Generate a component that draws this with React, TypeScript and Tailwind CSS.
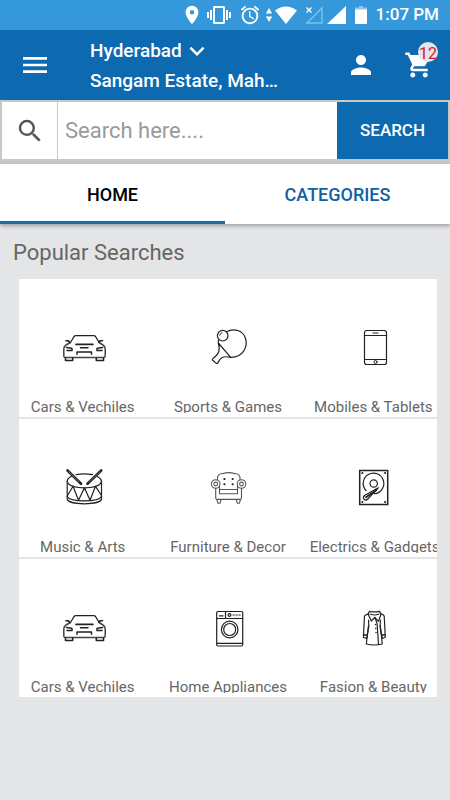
import { useState } from "react";
import type { ReactNode } from "react";
import {
  MdAlarm,
  MdKeyboardArrowDown,
  MdLocationOn,
  MdMenu,
  MdPerson,
  MdSearch,
  MdShoppingCart,
  MdVibration,
} from "react-icons/md";

const LineIcon = ({ children }: { children: ReactNode }) => (
  <svg
    viewBox="0 0 48 48"
    className="mx-auto size-12"
    fill="none"
    stroke="#222"
    strokeWidth="1.2"
    strokeLinecap="round"
    strokeLinejoin="round"
    aria-hidden="true"
  >
    {children}
  </svg>
);

const CarIcon = () => (
  <LineIcon>
    <path d="M11.5 18.5 15 12.6q.6-1 1.8-1h18q1.200 0 1.800 1l3.5 5.900" />
    <path
      d="M11.5 18.5 7 21q-2.200 1.300-2.200 4v7q0 1.600 1.600 1.600h38.400q1.400 0 1.400-1.600v-7q0-2.700-2.200-4l-4-2.500"
      stroke="#444"
      strokeWidth="1.5"
    />
    <path d="M17 20.400h17" strokeWidth="1.6" />
    <path d="M21.500 23.700h7.500M18 30.300V28h14.500v2.300" strokeWidth="1.5" />
    <path d="M7.500 23.500l5 .7q1 .8.5 2.300H8M43.500 23.500l-5 .7q-1 .8-.5 2.300h5" strokeWidth="1.5" />
    <path d="M7 16.700h2.500l1 1.500M43.500 16.700H41l-1 1.500" strokeWidth="1.6" />
    <path d="M6.500 34v2.500h7.200V34M37.300 34v2.500h7.200V34" strokeWidth="1.6" />
  </LineIcon>
);

const PaddleIcon = () => (
  <LineIcon>
    <circle cx="18.7" cy="11.7" r="5.3" />
    <path d="M15.700 11.200q.5-2 2.300-2.600" strokeWidth="1" />
    <path d="M22.500 7.800C30 3.500 39 6.500 41.600 14.500c2.400 8.500-2.600 19-14.900 18.800" />
    <path d="M14.600 15.800 14.300 19l12.400 14.300q-6-1.300-9 .4c-2 1.300-2.800 3.600-4 5.300q-.8.9-1.800.1L8.800 36.300q-.9-.9.1-1.700c2.300-2 4.900-3.600 5.900-6.800q.9-4-.5-8.800" />
  </LineIcon>
);

const PhoneIcon = () => (
  <LineIcon>
    <rect x="15.5" y="6.500" width="22" height="34" rx="2.2" />
    <path d="M15.500 11.500h22M15.500 35.500h22" />
    <path d="M24 9h5" />
    <circle cx="26.5" cy="38" r="1.5" strokeWidth="1" />
  </LineIcon>
);

const DrumIcon = () => (
  <LineIcon>
    <path d="M12.500 12.300C4.500 16 7 23.500 25.300 23.800 44 23.500 46 16 38 12.300M17 10.700q8-1.500 16.500 0" />
    <path d="M8.200 17v18.300c2 6 32.300 6 34.300 0V17" />
    <path d="M8.200 32.500c3 5.800 31.300 5.800 34.300 0" />
    <path d="M8.500 31.500 14 22.300l5.500 14 6-12.500 5.500 12.500 5.500-14 6 9.200" />
    <path d="M8.500 6.500 22 19.800M42.200 6.500 28.500 19.800" strokeWidth="2.6" />
    <path d="M9.500 7.500 20 17.800M41.200 7.500 30.500 17.800" stroke="#999" strokeWidth=".6" />
  </LineIcon>
);

const ArmchairIcon = () => (
  <LineIcon>
    <g stroke="#555" strokeWidth="1.1">
      <path d="M13.500 15.800c-.5-4.500 2-6.500 5.500-6.200 3-1 8.500-1 11.500 0 3.500-.3 6 1.700 5.500 6.200" />
      <circle cx="11.700" cy="20" r="4.300" />
      <circle cx="11.700" cy="20" r="1.900" />
      <circle cx="37.500" cy="20" r="4.300" />
      <circle cx="37.500" cy="20" r="1.900" />
      <path d="M11.700 24.300v9.700q0 1.400 1.400 1.400h23q1.400 0 1.400-1.400v-9.700" />
      <path d="M15.500 22v7.700h18V22M15.500 25.500h18" />
      <path d="M12.800 35.500 14 39.300h2l1-3.800M32.300 35.500l1 3.800h2l1.200-3.800" />
    </g>
    <path d="M20.300 15h.3M28.500 15h.3M20.300 20.300h.3M28.500 20.300h.3" strokeWidth="1.9" />
  </LineIcon>
);

const DiskIcon = () => (
  <LineIcon>
    <rect x="10.7" y="6.500" width="28" height="34" strokeWidth="1.5" strokeLinejoin="miter" />
    <path d="M17 26.500a10.300 10.300 0 1 1 8.500 3.200M30 28.200l-2 1.100" />
    <circle cx="24.7" cy="19.500" r="3.7" />
    <path d="M29.300 23.800 15.500 31.500q-2 1.700-.5 3.700 1.900 1.700 3.800-.2z" />
    <path d="M27.500 26 17 33.200" strokeWidth="1.8" />
    <path d="M13.300 9h.2M36 9h.2M13.300 38h.2M36 38h.2" strokeWidth="1.9" />
  </LineIcon>
);

const WasherIcon = () => (
  <LineIcon>
    <rect x="12.7" y="7.500" width="26" height="34.5" rx="1.2" />
    <path d="M12.700 14.500h26M12.700 39.300h26M21.500 7.500v7" />
    <circle cx="25.7" cy="25.500" r="8.300" />
    <circle cx="25.7" cy="25.500" r="6" />
    <circle cx="25.5" cy="11" r="1.400" />
    <path d="M15.500 11.800h3.500M29 11h1.200M32 11h1.200M35 11h1.200" />
  </LineIcon>
);

const CoatIcon = () => (
  <LineIcon>
    <path d="M20.500 7.300q4.500 1.200 10 0l1.500 3-2.500 7-3.700-4-3.500 3.700-3.300-7z" />
    <path d="M21 10q4.500 2 9 0M25.800 13.500l2.200 5.500q.8 9 1.500 21.500" />
    <path d="M19.500 9.800q-3 .5-4 2.200-.7 10.500-1 21.500l3.300.8 1.700-12.500M32 9.800q2.500.5 3.200 2.200.7 10.500 1 21.500l-3 .8-2-12.500" />
    <path d="M14.500 31h3.300M33 31h3.200" strokeWidth="1.6" />
    <path d="M19.500 16q1 6.500-.5 11.500-1.200 6-1.600 12.500 7.500 2 15.800 0-.3-6.500-1.500-12.500-1.200-5-.2-11.500" />
    <path d="M26.500 20.500h.1M26.700 24.500h.1M27 28.500h.1" strokeWidth="1.5" />
  </LineIcon>
);

const rows = [
  [
    { label: "Cars & Vechiles", Icon: CarIcon },
    { label: "Sports & Games", Icon: PaddleIcon },
    { label: "Mobiles & Tablets", Icon: PhoneIcon },
  ],
  [
    { label: "Music & Arts", Icon: DrumIcon },
    { label: "Furniture & Decor", Icon: ArmchairIcon },
    { label: "Electrics & Gadgets", Icon: DiskIcon },
  ],
  [
    { label: "Cars & Vechiles", Icon: CarIcon },
    { label: "Home Appliances", Icon: WasherIcon },
    { label: "Fasion & Beauty", Icon: CoatIcon },
  ],
];

const StatusBar = () => (
  <div className="flex h-[30px] items-center justify-end bg-[#3498db] pr-[11px] text-white">
    <MdLocationOn className="mr-1 size-[22px]" />
    <MdVibration className="mr-2 size-6" />
    <MdAlarm className="mr-1 size-[22px]" />
    <svg viewBox="0 0 8 16" className="mr-0.5 h-4 w-2" fill="currentColor" aria-hidden="true">
      <path d="M4 1 7.200 6.500H.8zM4 15 .8 9.500h6.400z" />
    </svg>
    <svg viewBox="0 0 22 18" className="mr-2 h-[18px] w-[22px]" fill="currentColor" aria-hidden="true">
      <path d="M0 4.500Q11-3.500 22 4.500L11 18z" />
    </svg>
    <svg viewBox="0 0 18 18" className="mr-1 size-[18px]" fill="none" aria-hidden="true">
      <path d="M17 2v15H2z" stroke="#7fc0ec" strokeWidth="1.4" />
      <path d="M0 0h8v9H0z" fill="#3498db" />
      <path d="M1.500 1.500l5 5M6.500 1.500l-5 5" stroke="white" strokeWidth="1.3" />
    </svg>
    <svg viewBox="0 0 20 18" className="h-[18px] w-5" fill="currentColor" aria-hidden="true">
      <path d="M19 0v18H0z" />
    </svg>
    <svg viewBox="0 0 12 18" className="mr-[9px] ml-2 h-[18px] w-3" fill="currentColor" aria-hidden="true">
      <path d="M4 0h4v1.500h4V4H0V1.500h4z" fill="#8ec7ee" />
      <path d="M0 3.500h12V17q0 1-1 1H1q-1 0-1-1z" />
    </svg>
    <span className="text-[17px] font-medium">1:07 PM</span>
  </div>
);

const Header = () => (
  <header className="flex h-[70px] items-center bg-[#0d69b0] pr-4 pl-[19px] text-white">
    <button type="button" aria-label="Open menu">
      <MdMenu className="size-8" />
    </button>
    <button type="button" className="ml-[39px] pt-0.5 text-left text-[19px] leading-[30px] font-medium whitespace-nowrap">
      <span className="flex items-center">
        Hyderabad
        <MdKeyboardArrowDown className="size-[30px]" />
      </span>
      <span className="block">Sangam Estate, Mah…</span>
    </button>
    <button type="button" aria-label="Account" className="ml-auto">
      <MdPerson className="size-[30px]" />
    </button>
    <button type="button" aria-label="Cart, 12 items" className="relative ml-7">
      <MdShoppingCart className="size-[30px]" />
      <span className="absolute -top-2 -right-1 flex size-5 items-center justify-center rounded-full bg-[#e4e5ea] pt-1 text-base text-[#d0202e]">
        12
      </span>
    </button>
  </header>
);

const SearchBar = () => (
  <form
    role="search"
    className="border-x-2 border-t-2 border-b-[5px] border-[#c8c8c8] bg-white"
    onSubmit={(e) => e.preventDefault()}
  >
    <div className="flex h-[57px]">
      <label htmlFor="search" className="flex w-14 items-center justify-center border-r border-[#c8c8c8]">
        <MdSearch className="size-[30px] text-[#555]" />
      </label>
      <input
        id="search"
        type="text"
        aria-label="Search"
        placeholder="Search here...."
        className="min-w-0 flex-1 px-[7px] text-[22px] text-[#333] outline-none placeholder:text-[#9a9a9a]"
      />
      <button type="submit" className="w-[111px] bg-[#0d69b0] text-[17px] font-medium text-white">
        SEARCH
      </button>
    </div>
  </form>
);

const tabs = ["HOME", "CATEGORIES"];

const Tabs = () => {
  const [active, setActive] = useState("HOME");

  return (
    <nav className="relative flex bg-white shadow-[0_2px_4px_rgba(0,0,0,0.3)]">
      {tabs.map((tab) => (
        <button
          key={tab}
          type="button"
          onClick={() => setActive(tab)}
          className={
            tab === active
              ? "h-[60px] flex-1 border-b-[3px] border-[#1b6aa5] pt-1 text-lg font-medium text-black"
              : "h-[60px] flex-1 border-b-[3px] border-white pt-1 text-lg font-medium text-[#0d62a3]"
          }
        >
          {tab}
        </button>
      ))}
    </nav>
  );
};

export default function App() {
  return (
    <div className="min-h-screen bg-[#e4e5e7] font-['Roboto',sans-serif]">
      <StatusBar />
      <Header />
      <SearchBar />
      <Tabs />
      <main className="pt-3 pr-[13px] pl-[19px]">
        <h1 className="-ml-1.5 text-[22px] leading-[34px] text-[#666]">Popular Searches</h1>
        <div className="mt-[9px] flex flex-col gap-0.5">
          {rows.map((row, i) => (
            <ul key={i} className="grid h-[138px] grid-cols-3 gap-x-[18px] bg-white">
              {row.map(({ label, Icon }) => (
                <li key={label} className="min-w-0">
                  <a href="#" className="block pt-[45px]">
                    <Icon />
                    {/* labels clip at the tile edge instead of wrapping */}
                    <span className="mt-[23px] block h-[18px] overflow-hidden text-center text-[15px] leading-6 whitespace-nowrap text-[#666]">
                      {label}
                    </span>
                  </a>
                </li>
              ))}
            </ul>
          ))}
        </div>
      </main>
    </div>
  );
}
